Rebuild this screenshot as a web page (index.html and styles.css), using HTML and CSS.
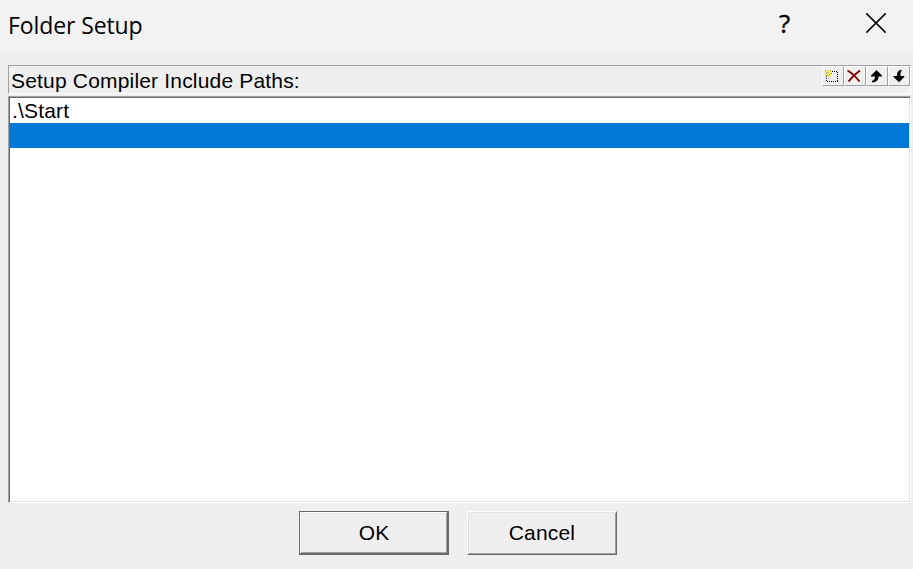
FILE: index.html
```html
<!DOCTYPE html>
<html lang="en">
<head>
<meta charset="utf-8">
<title>Folder Setup</title>
<link rel="stylesheet" href="styles.css">
</head>
<body>
<div class="dialog">
  <header class="titlebar">
    <span class="title">Folder Setup</span>
    <span class="help">?</span>
    <svg class="close" width="22" height="22" viewBox="0 0 22 22"><path d="M1.3 1.3 20.7 20.7M20.7 1.3 1.3 20.7" fill="none" stroke="#111" stroke-width="1.7"/></svg>
  </header>
  <main class="content">
    <div class="caption">
      <span class="caption-text">Setup Compiler Include Paths:</span>
      <div class="tools">
        <span class="tool"><svg width="20" height="18" viewBox="0 0 20 18"><path d="M9 4.500h6M4 14.500h11" stroke="#000" stroke-dasharray="1 1"/><path d="M3.500 9v6M14.500 5v10" stroke="#000" stroke-dasharray="1 1"/><path d="M2 3.500 8 9M8.500 3 2.500 9.500M5.500 3v7M2 6.500h7" stroke="#e6e03c" stroke-width="1.1"/><path d="M2 3.500h1M7 3.500h1M3 5.500h1M8 6.500h1M3 8.500h1" stroke="#888"/></svg></span>
        <span class="tool"><svg width="20" height="18" viewBox="0 0 20 18"><path d="M2.500 3.500C7 6 11 10 14.500 14.500M15 3.500C10 7 6 11 3.500 14.500" fill="none" stroke="#800000" stroke-width="1.9"/></svg></span>
        <span class="tool"><svg width="20" height="18" viewBox="0 0 20 18"><path d="M9.500 3 15 8.500V9.500H11.500Q11.500 14 7 15.200H5V14Q8 12.500 8 9.500H4V8.500z"/></svg></span>
        <span class="tool"><svg width="20" height="18" viewBox="0 0 20 18"><path d="M12.500 3H11Q7.500 4.500 8 9H4.500V10L10 15.200 15.300 10V9H11.500Q11 5.500 12.500 4z"/></svg></span>
      </div>
    </div>
    <div class="list">
      <div class="row">.\Start</div>
      <div class="row selected"></div>
    </div>
    <div class="actions">
      <button class="button default">OK</button>
      <button class="button">Cancel</button>
    </div>
  </main>
</div>
</body>
</html>
```
FILE: styles.css
```css
* { box-sizing: border-box; }
body {
  margin: 0;
  background: #efefef;
  color: #000;
  font-family: "Liberation Sans", Arial, sans-serif;
  font-size: 21px;
  letter-spacing: 0.18px;
}
.dialog { height: 569px; overflow: hidden; }
.titlebar {
  display: flex;
  height: 52px;
  padding: 0 26px 0 8px;
  background: #f2f2f2;
  font-family: "Open Sans", "Noto Sans", sans-serif;
}
.title {
  flex: 1;
  font-size: 23px;
  line-height: 50px;
  letter-spacing: -0.1px;
}
.help {
  width: 12px;
  margin-right: 74px;
  font-size: 26px;
  line-height: 46px;
  -webkit-text-stroke: 0.4px #000;
}
.close { margin-top: 12px; }
.content { padding: 13px 2px 0 8px; }
.caption {
  display: flex;
  justify-content: space-between;
  height: 29px;
  border: 1px solid #a0a0a0;
  border-right-color: #fff;
  border-bottom-color: #fff;
}
.caption-text {
  padding-left: 2px;
  line-height: 29px;
  white-space: nowrap;
}
.tools { display: flex; }
.tool {
  width: 22px;
  height: 20px;
  border: 1px solid #fff;
  border-right-color: #a0a0a0;
  border-bottom-color: #a0a0a0;
}
.tool svg { display: block; }
.list {
  height: 407px;
  margin-top: 2px;
  border: 1px solid #a0a0a0;
  border-right-color: #fff;
  border-bottom-color: #fff;
  background: #fff;
  box-shadow: inset 1px 1px #696969, inset -1px -1px #e3e3e3;
  padding: 1px;
}
.row {
  height: 25px;
  padding-left: 2px;
  line-height: 25px;
}
.selected { background: #0078d7; }
.actions {
  display: flex;
  gap: 18px;
  padding: 8px 0 0 291px;
}
.button {
  width: 150px;
  height: 44px;
  padding: 0;
  border: 1px solid #fff;
  border-right-color: #696969;
  border-bottom-color: #696969;
  background: #efefef;
  box-shadow: inset 1px 1px #e3e3e3, inset -1px -1px #a0a0a0;
  color: #000;
  font: inherit;
  letter-spacing: 0.18px;
}
.default {
  border-color: #696969;
  box-shadow: inset -1px -1px #696969, inset 1px 1px #fff, inset -2px -2px #a0a0a0, inset 2px 2px #e3e3e3;
}
```
